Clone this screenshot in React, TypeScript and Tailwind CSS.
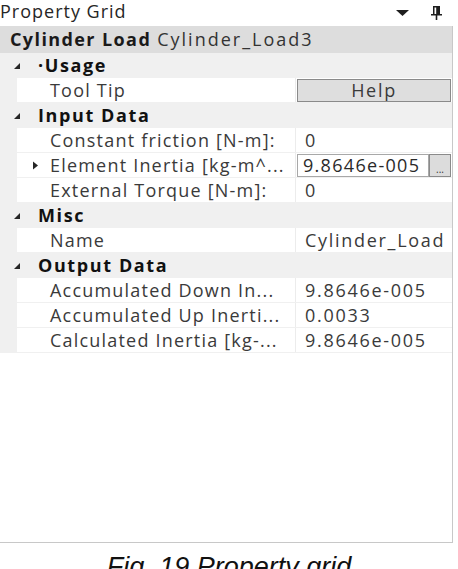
import React from "react";

type Prop = {
    label: string;
    value?: string;
    kind?: "text" | "button" | "edit";
    expandable?: boolean;
};

type Category = {
    name: string;
    props: Prop[];
};

const categories: Category[] = [
    { name: "·Usage", props: [{ label: "Tool Tip", value: "Help", kind: "button" }] },
    {
        name: "Input Data",
        props: [
            { label: "Constant friction [N-m]:", value: "0" },
            { label: "Element Inertia [kg-m^...", value: "9.8646e-005", kind: "edit", expandable: true },
            { label: "External Torque [N-m]:", value: "0" },
        ],
    },
    { name: "Misc", props: [{ label: "Name", value: "Cylinder_Load" }] },
    {
        name: "Output Data",
        props: [
            { label: "Accumulated Down In...", value: "9.8646e-005" },
            { label: "Accumulated Up Inerti...", value: "0.0033" },
            { label: "Calculated Inertia [kg-...", value: "9.8646e-005" },
        ],
    },
];

function Expanded() {
    return (
        <svg width="8" height="8" viewBox="0 0 8 8" className="shrink-0">
            <path d="M7 1 L7 7 L1 7 Z" fill="#262626" />
        </svg>
    );
}

function Collapsed() {
    return (
        <svg width="7" height="9" viewBox="0 0 7 9" className="shrink-0">
            <path d="M1 0.5 L6 4.5 L1 8.5 Z" fill="#262626" />
        </svg>
    );
}

function PropRow({ prop }: { prop: Prop }) {
    return (
        <div className="flex h-[25px]">
            <div className="w-[17px] shrink-0 bg-[#f0f0f0]" />
            <div className="flex flex-1 bg-white border-b border-[#f0f0f0]">
                <div className="w-[279px] shrink-0 flex items-center border-r border-[#ececec] overflow-hidden whitespace-nowrap">
                    <div className="w-[33px] shrink-0 flex justify-center pl-[4px]">
                        {prop.expandable && <Collapsed />}
                    </div>
                    <span className="text-[#3a3a3a] tracking-[1.2px]">{prop.label}</span>
                </div>
                <div className="flex-1 flex items-center min-w-0 tracking-[1.7px]">
                    {prop.kind === "button" ? (
                        <div className="flex-1 h-[23px] mx-[1px] bg-[#dedede] border border-[#8a8a8a] flex items-center justify-center text-[#3a3a3a]">
                            {prop.value}
                        </div>
                    ) : prop.kind === "edit" ? (
                        <div className="flex-1 flex h-[23px] mx-[1px]">
                            <div className="flex-1 border border-[#a8a8a8] flex items-center pl-[5px] text-[#2a2a2a] overflow-hidden whitespace-nowrap tracking-[1.3px]">
                                {prop.value}
                            </div>
                            <div className="w-[22px] bg-[#dcdcdc] border border-[#8a8a8a] flex items-end justify-center text-[10px] leading-[14px] tracking-normal text-[#333]">
                                ...
                            </div>
                        </div>
                    ) : (
                        <span className="pl-[9px] text-[#3a3a3a] whitespace-nowrap">{prop.value}</span>
                    )}
                </div>
            </div>
        </div>
    );
}

export default function App() {
    return (
        <div className="w-[458px] h-[569px] bg-white overflow-hidden font-['Open_Sans',sans-serif] text-[18px] tracking-[1px]">
            <div className="h-[26px] flex items-center justify-between pr-[16px]">
                <span className="text-[18px] leading-[20px] text-[#262626] -mt-[4px]">Property Grid</span>
                <div className="flex items-center gap-[22px]">
                    <svg width="13" height="7" viewBox="0 0 13 7">
                        <path d="M0 0 L13 0 L6.5 6 Z" fill="#1e1e1e" />
                    </svg>
                    <svg width="11" height="14" viewBox="0 0 11 14">
                        <path d="M2 0 H9 V8 H11 V9.5 H6.3 V14 H4.7 V9.5 H0 V8 H2 Z M3.5 1.5 V8 H5.2 V1.5 Z" fill="#1e1e1e" fillRule="evenodd" />
                    </svg>
                </div>
            </div>
            <div className="w-[453px] h-[517px] border-r border-b border-[#c8c8c8] flex flex-col">
                <div className="h-[27px] shrink-0 bg-[#dddddd] flex items-center pl-[10px] whitespace-nowrap">
                    <span className="font-bold text-[#1a1a1a] tracking-[1.4px]">Cylinder Load</span>
                    <span className="ml-[6px] text-[#333] tracking-[2px]">Cylinder_Load3</span>
                </div>
                {categories.map((cat) => (
                    <div key={cat.name}>
                        <div className="h-[25px] bg-[#f0f0f0] flex items-center">
                            <div className="w-[30px] flex justify-center pl-[4px]">
                                <Expanded />
                            </div>
                            <span className="font-bold text-[#111] ml-[8px] tracking-[1.6px]">{cat.name}</span>
                        </div>
                        {cat.props.map((p) => (
                            <PropRow key={p.label} prop={p} />
                        ))}
                    </div>
                ))}
            </div>
            <div className="text-center italic font-['Liberation_Sans',sans-serif] text-[27px] leading-[31px] tracking-normal text-[#111] mt-[9px]">
                Fig. 19 Property grid
            </div>
        </div>
    );
}
